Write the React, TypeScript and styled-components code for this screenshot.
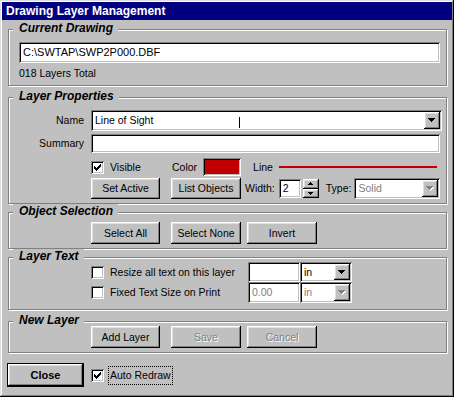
import React from "react";
import styled, { createGlobalStyle, css } from "styled-components";

const Global = createGlobalStyle`
  html, body { margin: 0; padding: 0; background: #c0c0c0; }
  body { font-family: "Liberation Sans", Arial, sans-serif; font-size: 10.5px; line-height: 13px; color: #000; }
  * { box-sizing: border-box; }
`;

const raised = css`
  background: #c0c0c0;
  box-shadow: inset -1px -1px #000, inset 1px 1px #fff, inset -2px -2px #808080, inset 2px 2px #dfdfdf;
`;

const sunken = css`
  box-shadow: inset 1px 1px #808080, inset -1px -1px #fff, inset 2px 2px #000, inset -2px -2px #c0c0c0;
`;

const Window = styled.div`
  width: 454px;
  height: 397px;
  padding: 2px;
  background: #c0c0c0;
  box-shadow: inset -1px -1px #000, inset 1px 1px #dfdfdf, inset -2px -2px #808080, inset 2px 2px #fff;
  display: flex;
  flex-direction: column;
`;

const TitleBar = styled.div`
  height: 18px;
  flex: none;
  background: #000080;
  color: #fff;
  font: bold 12px "Liberation Sans", Arial, sans-serif;
  display: flex;
  align-items: center;
  padding-left: 4px;
`;

const Content = styled.div`
  display: flex;
  flex-direction: column;
  padding: 0 5px 0 6px;
`;

const Group = styled.section<{ $mt: number; $pad: string }>`
  position: relative;
  margin-top: ${(p) => p.$mt}px;
  padding: ${(p) => p.$pad};
  border: 1px solid #808080;
  box-shadow: inset 1px 1px #fff, 1px 1px #fff;
`;

const Legend = styled.span`
  position: absolute;
  top: -9px;
  left: 4px;
  padding: 0 5px 0 6px;
  background: #c0c0c0;
  font: italic bold 12px/14px "Liberation Sans", Arial, sans-serif;
`;

const Row = styled.div<{ $mt?: number; $h: number; $indent?: boolean }>`
  display: flex;
  align-items: center;
  height: ${(p) => p.$h}px;
  margin-top: ${(p) => p.$mt ?? 0}px;
  padding-left: ${(p) => (p.$indent ? 82 : 0)}px;
`;

const Label = styled.span`
  width: 75px;
  margin-right: 7px;
  text-align: right;
  flex: none;
`;

const Text = styled.span<{ $ml?: number }>`
  margin-left: ${(p) => p.$ml ?? 0}px;
  white-space: nowrap;
  flex: none;
`;

const Field = styled.div<{ $w?: number; $h: number; $mr?: number; $ml?: number; $disabled?: boolean; $size?: number }>`
  ${sunken};
  background: #fff;
  position: relative;
  display: flex;
  align-items: center;
  height: ${(p) => p.$h}px;
  ${(p) => (p.$w ? `width: ${p.$w}px; flex: none;` : "flex: 1;")}
  margin-left: ${(p) => p.$ml ?? 0}px;
  margin-right: ${(p) => p.$mr ?? 0}px;
  padding: 0 4px;
  color: ${(p) => (p.$disabled ? "#808080" : "#000")};
  font-size: ${(p) => p.$size ?? 10.5}px;
  white-space: nowrap;
  overflow: hidden;
`;

const Combo = styled.div<{ $w?: number; $h: number; $ml?: number; $mr?: number; $disabled?: boolean }>`
  ${sunken};
  background: #fff;
  position: relative;
  display: flex;
  align-items: stretch;
  height: ${(p) => p.$h}px;
  ${(p) => (p.$w ? `width: ${p.$w}px; flex: none;` : "flex: 1;")}
  margin-left: ${(p) => p.$ml ?? 0}px;
  margin-right: ${(p) => p.$mr ?? 0}px;
  padding: 2px;
  color: ${(p) => (p.$disabled ? "#808080" : "#000")};
`;

const ComboText = styled.span`
  flex: 1;
  display: flex;
  align-items: center;
  padding-left: 2px;
  white-space: nowrap;
`;

const DropButton = styled.span`
  ${raised};
  width: 16px;
  flex: none;
  display: flex;
  align-items: center;
  justify-content: center;
`;

const Button = styled.button<{ $w: number; $h: number; $ml?: number }>`
  ${raised};
  border: none;
  padding: 0;
  margin: 0 0 0 ${(p) => p.$ml ?? 0}px;
  width: ${(p) => p.$w}px;
  height: ${(p) => p.$h}px;
  flex: none;
  font: 10.5px/13px "Liberation Sans", Arial, sans-serif;
  color: #000;
  &:disabled {
    color: #808080;
    text-shadow: 1px 1px #fff;
  }
`;

const DefaultButton = styled(Button)`
  font-weight: bold;
  font-size: 11px;
  border: 1px solid #000;
`;

const Box = styled.span`
  ${sunken};
  background: #fff;
  width: 13px;
  height: 13px;
  flex: none;
  display: flex;
  align-items: center;
  justify-content: center;
`;

const CheckItem = styled.label<{ $w?: number; $ml?: number }>`
  display: flex;
  align-items: center;
  gap: 6px;
  ${(p) => (p.$w ? `width: ${p.$w}px;` : "")}
  margin-left: ${(p) => p.$ml ?? 0}px;
  flex: none;
  white-space: nowrap;
`;

const Swatch = styled.span<{ $color: string }>`
  ${sunken};
  background: ${(p) => p.$color};
  width: 38px;
  height: 18px;
  margin-left: 6px;
  flex: none;
`;

const LineSample = styled.span<{ $color: string }>`
  flex: 1;
  height: 2px;
  margin: 0 5px 0 6px;
  background: ${(p) => p.$color};
`;

const Spinner = styled.span`
  display: flex;
  flex-direction: column;
  width: 16px;
  height: 19px;
  margin-left: 2px;
  flex: none;
`;

const SpinHalf = styled.span`
  ${raised};
  flex: 1;
  display: flex;
  align-items: center;
  justify-content: center;
`;

const Focus = styled.span`
  outline: 1px dotted #000;
  outline-offset: 0;
  height: 17px;
  display: flex;
  align-items: center;
  padding: 0 1px;
  margin-left: -1px;
`;

const CloseRow = styled.div`
  display: flex;
  align-items: center;
  margin-top: 10px;
  margin-left: -1px;
`;

const Cursor = styled.span`
  position: absolute;
  left: 148px;
  top: 7px;
  width: 1px;
  height: 11px;
  background: #000;
`;

const CHECK = ["......#", ".....##", "#...###", "##.###.", "#####..", ".###...", "..#...."];

const CheckMark = () => (
  <svg width="7" height="7" viewBox="0 0 7 7" shapeRendering="crispEdges">
    {CHECK.flatMap((row, y) =>
      row.split("").map((c, x) => (c === "#" ? <rect key={`${x}-${y}`} x={x} y={y} width="1" height="1" fill="#000" /> : null))
    )}
  </svg>
);

const Check = ({ checked }: { checked?: boolean }) => <Box>{checked && <CheckMark />}</Box>;

const DownArrow = ({ disabled }: { disabled?: boolean }) => (
  <svg width="8" height="5" viewBox="0 0 8 5" shapeRendering="crispEdges">
    {disabled && <path d="M1 1h7v1h-1v1h-1v1h-1v1h-1v-1h-1v-1h-1v-1h-1z" fill="#fff" />}
    <path d="M0 0h7v1h-1v1h-1v1h-1v1h-1v-1h-1v-1h-1v-1h-1z" fill={disabled ? "#808080" : "#000"} />
  </svg>
);

const SpinArrow = ({ up }: { up?: boolean }) => (
  <svg width="5" height="3" viewBox="0 0 5 3" shapeRendering="crispEdges">
    <path d={up ? "M2 0h1v1h1v1h1v1h-5v-1h1v-1h1z" : "M0 0h5v1h-1v1h-1v1h-1v-1h-1v-1h-1z"} fill="#000" />
  </svg>
);

export default function App() {
  return (
    <>
      <Global />
      <Window>
        <TitleBar>Drawing Layer Management</TitleBar>
        <Content>
          <Group $mt={9} $pad="12px 6px 5px 10px">
            <Legend>Current Drawing</Legend>
            <Field $h={21} $size={11}>C:\SWTAP\SWP2P000.DBF</Field>
            <Row $h={13} $mt={4}>
              <Text>018 Layers Total</Text>
            </Row>
          </Group>

          <Group $mt={11} $pad="12px 4px 4px 0">
            <Legend>Layer Properties</Legend>
            <Row $h={21}>
              <Label>Name</Label>
              <Combo $h={21}>
                <ComboText>Line of Sight</ComboText>
                <DropButton>
                  <DownArrow />
                </DropButton>
                <Cursor />
              </Combo>
            </Row>
            <Row $h={19} $mt={3}>
              <Label>Summary</Label>
              <Field $h={19} $mr={2} />
            </Row>
            <Row $h={18} $mt={5} $indent>
              <CheckItem $w={81}>
                <Check checked />
                Visible
              </CheckItem>
              <Text>Color</Text>
              <Swatch $color="#c00000" />
              <Text $ml={12}>Line</Text>
              <LineSample $color="#c00000" />
            </Row>
            <Row $h={21} $mt={2} $indent>
              <Button $w={69} $h={21}>Set Active</Button>
              <Button $w={70} $h={21} $ml={11}>List Objects</Button>
              <Text $ml={4}>Width:</Text>
              <Field $w={22} $h={19} $ml={4}>2</Field>
              <Spinner>
                <SpinHalf>
                  <SpinArrow up />
                </SpinHalf>
                <SpinHalf>
                  <SpinArrow />
                </SpinHalf>
              </Spinner>
              <Text $ml={7}>Type:</Text>
              <Combo $h={21} $ml={3} $mr={2} $disabled>
                <ComboText>Solid</ComboText>
                <DropButton>
                  <DownArrow disabled />
                </DropButton>
              </Combo>
            </Row>
          </Group>

          <Group $mt={8} $pad="9px 4px 4px 0">
            <Legend>Object Selection</Legend>
            <Row $h={22} $indent>
              <Button $w={69} $h={22}>Select All</Button>
              <Button $w={70} $h={22} $ml={11}>Select None</Button>
              <Button $w={70} $h={22} $ml={6}>Invert</Button>
            </Row>
          </Group>

          <Group $mt={8} $pad="4px 4px 6px 0">
            <Legend>Layer Text</Legend>
            <Row $h={20} $indent>
              <CheckItem $w={157}>
                <Check />
                Resize all text on this layer
              </CheckItem>
              <Field $w={52} $h={20} />
              <Combo $w={52} $h={20}>
                <ComboText>in</ComboText>
                <DropButton>
                  <DownArrow />
                </DropButton>
              </Combo>
            </Row>
            <Row $h={21} $indent>
              <CheckItem $w={157}>
                <Check />
                Fixed Text Size on Print
              </CheckItem>
              <Field $w={52} $h={21} $disabled>0.00</Field>
              <Combo $w={52} $h={21} $disabled>
                <ComboText>in</ComboText>
                <DropButton>
                  <DownArrow disabled />
                </DropButton>
              </Combo>
            </Row>
          </Group>

          <Group $mt={11} $pad="4px 4px 4px 0">
            <Legend>New Layer</Legend>
            <Row $h={22} $indent>
              <Button $w={69} $h={22}>Add Layer</Button>
              <Button $w={70} $h={22} $ml={11} disabled>Save</Button>
              <Button $w={70} $h={22} $ml={6} disabled>Cancel</Button>
            </Row>
          </Group>

          <CloseRow>
            <DefaultButton $w={77} $h={24}>Close</DefaultButton>
            <CheckItem $ml={7}>
              <Check checked />
              <Focus>Auto Redraw</Focus>
            </CheckItem>
          </CloseRow>
        </Content>
      </Window>
    </>
  );
}
